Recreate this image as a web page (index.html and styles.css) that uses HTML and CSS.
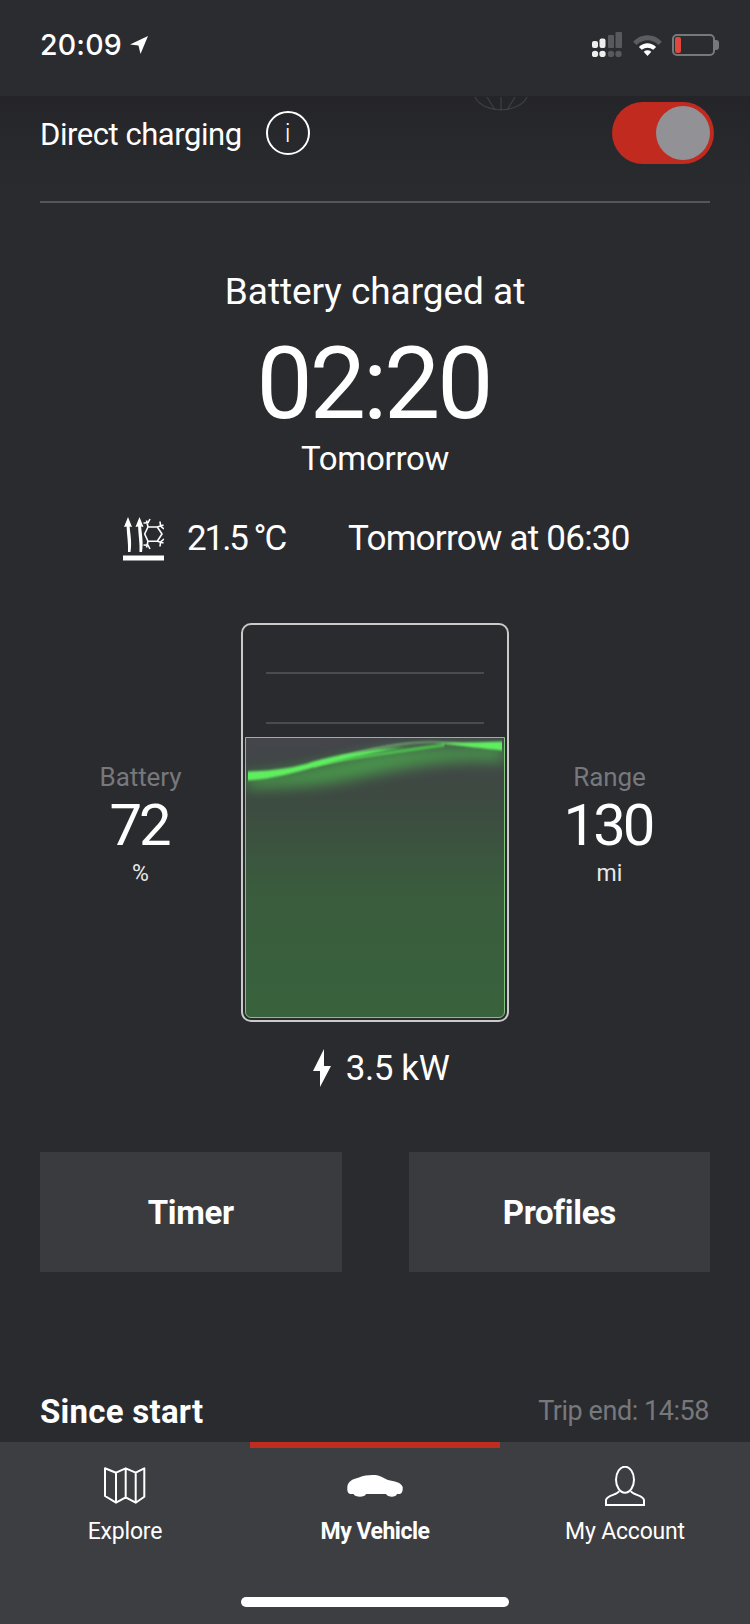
FILE: index.html
```html
<!DOCTYPE html>
<html lang="en">
<head>
<meta charset="utf-8">
<title>My Vehicle</title>
<link rel="stylesheet" href="styles.css">
</head>
<body>
<div class="app">
  <header class="status">
    <div class="status-left">
      <span class="clock">20:09</span>
      <svg class="loc" viewBox="0 0 20 20"><path d="M19 1 L1 9.500 L9.500 10.500 L11.500 19 Z" fill="#fff"/></svg>
    </div>
    <div class="status-right">
      <svg class="signal" viewBox="0 0 31 25">
        <g fill="#eee">
          <rect x="0" y="9" width="6" height="7" rx="2"/><rect x="7.500" y="6.500" width="6" height="9.500" rx="2"/>
          <circle cx="3" cy="22" r="3.200"/><circle cx="10.500" cy="22" r="3.200"/>
        </g>
        <g fill="#58595c">
          <rect x="16" y="3" width="6" height="13" rx="1"/><rect x="23.500" y="0" width="6.500" height="16" rx="1"/>
          <circle cx="19" cy="22" r="3.200"/><circle cx="26.500" cy="22" r="3.200"/>
        </g>
      </svg>
      <svg class="wifi" viewBox="0 0 30 23">
        <path d="M0 8 C8 -1 22 -1 30 8 L26.500 11.500 C19 5 11 5 3.500 11.500 Z" fill="#5c5d60"/>
        <path d="M6 13.500 C11.500 8.500 18.500 8.500 24 13.500 L21 16.500 C17 13.500 13 13.500 9 16.500 Z" fill="#fff"/>
        <path d="M11 18.500 C13.500 16.500 16.500 16.500 19 18.500 L15 23 Z" fill="#fff"/>
      </svg>
      <div class="batt"><div class="batt-body"><div class="batt-level"></div></div><div class="batt-tip"></div></div>
    </div>
  </header>

  <main class="content">
    <svg class="wheel" viewBox="0 0 60 20"><g fill="none" stroke="#3f4044" stroke-width="1.200"><path d="M4 1 C12 18 48 18 56 1"/><path d="M16 1 L24 14 M30 1 V15 M44 1 L36 14"/></g></svg>
    <section class="direct">
      <div class="direct-label">
        <span class="direct-text">Direct charging</span>
        <span class="info">i</span>
      </div>
      <div class="toggle"><div class="knob"></div></div>
    </section>

    <section class="eta">
      <div class="eta-title">Battery charged at</div>
      <div class="eta-time">02:20</div>
      <div class="eta-day">Tomorrow</div>
    </section>

    <section class="climate">
      <svg class="clim-icon" viewBox="0 0 41 44">
        <path d="M5 0 L9 10 L6.600 9.500 C7.500 18 9 26 7.500 35 L5 35 C5.500 26 3.800 18 3.600 9.500 L1 10 Z" fill="#fff"/>
        <path d="M16.500 0 L20.500 10 L18.100 9.500 C19 18 20.500 26 19 35 L16.500 35 C17 26 15.300 18 15.100 9.500 L12.500 10 Z" fill="#fff"/>
        <g fill="none" stroke="#fff" stroke-width="1.600">
          <path d="M25 10 H34.300 L39 17 L34.300 24.300 H25 L21.700 17 Z"/>
          <path d="M25 10 L23.500 3.500 M20.500 6 L25 5.800 L27 2"/>
          <path d="M34.300 10 L40.500 8 M37 4.500 L37.600 9 L41 12"/>
          <path d="M34.300 24.300 L40.500 26 M41 22 L37.600 25 L37 29.500"/>
          <path d="M25 24.300 L23.500 30.500 M20.500 28 L25 28.200 L27 32"/>
        </g>
        <rect x="0" y="38.500" width="41" height="5" fill="#fff"/>
      </svg>
      <span class="clim-temp">21.5 °C</span>
      <span class="clim-when">Tomorrow at 06:30</span>
    </section>

    <section class="gauge">
      <div class="stat">
        <div class="stat-label">Battery</div>
        <div class="stat-value">72</div>
        <div class="stat-unit">%</div>
      </div>
      <div class="cell">
        <div class="tick"></div>
        <div class="tick"></div>
        <div class="fill">
          <svg class="glow" viewBox="0 0 260 70" preserveAspectRatio="none">
            <defs>
              <filter id="b1" x="-10%" y="-80%" width="120%" height="260%"><feGaussianBlur stdDeviation="7"/></filter>
              <filter id="b2" x="-10%" y="-60%" width="120%" height="220%"><feGaussianBlur stdDeviation=".8"/></filter>
            </defs>
            <path d="M0 38 C40 36 80 26 130 14 C170 8 220 8 260 8 L260 24 C210 20 170 28 120 38 C80 48 40 50 0 50 Z" fill="#4fc94f" opacity=".6" filter="url(#b1)"/>
            <path d="M95 19 C120 12 140 8 158 6 C175 3.500 200 4 218 6 C230 7 245 8 257 8" fill="none" stroke="#8fd08f" stroke-width="1.300" opacity=".8" filter="url(#b2)"/>
            <path d="M68 28 C100 20 150 14 200 7" fill="none" stroke="#4fcf4f" stroke-width="3" opacity=".85" filter="url(#b2)"/>
            <path d="M2 33.500 C25 33 50 30 68 23.500 C90 17 120 12 160 9 C120 16 95 22 68 29.500 C45 36 25 41 2 42.500 Z" fill="#5eee5e" filter="url(#b2)"/>
            <path d="M190 5 C220 5 240 4 258 3.500 L258 12.500 C235 10 220 8 190 5 Z" fill="#5eee5e" filter="url(#b2)"/>
          </svg>
        </div>
      </div>
      <div class="stat">
        <div class="stat-label">Range</div>
        <div class="stat-value">130</div>
        <div class="stat-unit">mi</div>
      </div>
    </section>

    <section class="power">
      <svg class="bolt" viewBox="0 0 18 38"><path d="M11 0 L0 22 L7 22 L7 38 L18 17 L11 17 Z" fill="#fff"/></svg>
      <span class="power-text">3.5 kW</span>
    </section>

    <section class="actions">
      <button class="btn">Timer</button>
      <button class="btn">Profiles</button>
    </section>

    <section class="since">
      <span class="since-title">Since start</span>
      <span class="since-trip">Trip end: 14:58</span>
    </section>
  </main>

  <nav class="tabs">
    <div class="tab-row">
      <div class="tab">
        <svg class="tab-icon" viewBox="0 0 56 42"><path d="M8 2.300 L19 6.700 L28.700 2.300 L38.700 6.700 L47.300 2.300 V30.700 L38.700 36.700 L28.700 31.300 L19 36.700 L8 30 Z M19 6.700 V36.700 M28.700 2.300 V31.300 M38.700 6.700 V36.700" fill="none" stroke="#fff" stroke-width="2" stroke-linejoin="round"/></svg>
        <span class="tab-label">Explore</span>
      </div>
      <div class="tab tab-active">
        <svg class="tab-icon" viewBox="0 0 56 42"><path d="M.300 21.500 C.500 16 5 13 12 11.500 C18 9 26 8.500 31 9.500 C35 10.500 38 13 41 14 C47 15 54.500 16.500 55.700 21 C56 25 55 27.500 53 28 L50 28 C49 31.500 41 31.500 39 28 L19 28 C18 31.500 8 31.500 6.500 28 L3 28 C1 27.500 0 25 .300 21.500 Z" fill="#fff"/></svg>
        <span class="tab-label">My Vehicle</span>
      </div>
      <div class="tab">
        <svg class="tab-icon" viewBox="0 0 56 42"><g fill="none" stroke="#fff" stroke-width="2"><ellipse cx="28" cy="13.700" rx="9" ry="13"/><path d="M22 25 C21 29 10 29 9 34 V39 H47 V34 C46 29 35 29 34 25"/></g></svg>
        <span class="tab-label">My Account</span>
      </div>
    </div>
    <div class="home"></div>
  </nav>
</div>
</body>
</html>
```
FILE: styles.css
```css
* { box-sizing: border-box; margin: 0; padding: 0; }
html, body { width: 750px; height: 1624px; overflow: hidden; background: #2a2b2f; }
body { font-family: Roboto, "Liberation Sans", sans-serif; color: #fff; font-weight: 400; }
.app { width: 750px; height: 1624px; display: flex; flex-direction: column; }

.status { height: 96px; flex: none; display: flex; justify-content: space-between; align-items: flex-start; padding: 29px 31px 0 40px; background: #2b2c30; }
.status-left { display: flex; align-items: center; gap: 7px; }
.clock { font-family: Inter, sans-serif; font-size: 28.500px; line-height: 32px; font-weight: 500; letter-spacing: .2px; }
.loc { width: 20px; height: 20px; }
.status-right { display: flex; align-items: center; gap: 10px; padding-top: 3px; }
.signal { width: 31px; height: 25px; }
.wifi { width: 29px; height: 22px; }
.batt { display: flex; align-items: center; }
.batt-body { width: 43px; height: 22px; border: 2px solid #77787b; border-radius: 5px; padding: 1px; }
.batt-level { width: 6px; height: 100%; background: #e0473d; border-radius: 2px; }
.batt-tip { width: 4px; height: 10px; background: #77787b; border-radius: 0 3px 3px 0; }

.content { flex: 1; min-height: 0; position: relative; overflow: hidden; padding: 0 40px; background: linear-gradient(#242429 0, #27282c 40px, #2a2b2f 90px); }
.wheel { position: absolute; left: 471px; top: 0; width: 60px; height: 20px; }

.direct { height: 107px; padding: 0 0 31px; display: flex; justify-content: space-between; align-items: center; border-bottom: 2px solid #55565a; }
.direct-label { display: flex; align-items: center; gap: 24px; }
.direct-text { font-size: 31px; letter-spacing: -.45px; padding-top: 2px; }
.info { width: 44px; height: 44px; border: 2px solid #fff; border-radius: 50%; display: flex; align-items: center; justify-content: center; font-size: 26px; font-weight: 300; }
.toggle { width: 102px; height: 62px; margin-right: -4px; border-radius: 31px; background: #c12a1f; display: flex; align-items: center; justify-content: flex-end; padding-right: 4px; }
.knob { width: 54px; height: 54px; border-radius: 50%; background: #929296; }

.eta { display: flex; flex-direction: column; align-items: center; padding-top: 66px; }
.eta-title { font-size: 37px; line-height: 46px; letter-spacing: -.05px; }
.eta-time { font-size: 100px; line-height: 108px; margin-top: 15px; letter-spacing: -3px; padding-right: 3px; }
.eta-day { font-size: 33px; line-height: 44px; margin-top: -1px; letter-spacing: -.3px; }

.climate { display: flex; align-items: center; padding: 35px 0 0 83px; height: 80px; }
.clim-icon { width: 41px; height: 44px; }
.clim-temp { font-size: 35px; margin-left: 23px; width: 161px; letter-spacing: -2.100px; }
.clim-when { font-size: 35px; letter-spacing: -.75px; }

.gauge { display: flex; align-items: flex-start; margin-top: 62px; }
.stat { width: 201px; display: flex; flex-direction: column; align-items: center; padding-top: 137px; }
.stat-label { font-size: 26px; line-height: 34px; color: #77787c; letter-spacing: -.1px; }
.stat-value { font-size: 58px; line-height: 62px; letter-spacing: -3px; padding-right: 3px; }
.stat-unit { font-size: 23px; line-height: 36px; color: #e8e8e8; }
.cell { width: 268px; height: 399px; border: 2px solid #c9cbc9; border-radius: 10px; padding: 47px 2px 2px; display: flex; flex-direction: column; }
.tick { height: 2px; margin: 0 21px 48px; background: #4a4b4e; flex: none; }
.tick + .tick { margin-bottom: 13px; }
.fill { flex: 1; min-height: 0; border: 1px solid #7fc77f; border-radius: 0 0 6px 6px; overflow: hidden; background: linear-gradient(#44454b 0, #3d4a41 22%, #3a5c3d 55%, #38623c 100%); }
.glow { display: block; width: 100%; height: 70px; }

.power { display: flex; align-items: center; justify-content: center; gap: 15px; height: 40px; margin-top: 26px; padding-left: 12px; }
.bolt { width: 18px; height: 38px; }
.power-text { font-size: 35px; letter-spacing: -.4px; }

.actions { display: flex; justify-content: space-between; margin-top: 64px; }
.btn { width: 301.500px; height: 120px; border: 0; background: #3a3b3f; color: #fff; font-family: Roboto, sans-serif; font-size: 33px; font-weight: 700; letter-spacing: -.3px; }

.since { display: flex; justify-content: space-between; align-items: center; margin-top: 119px; height: 40px; }
.since-title { font-size: 33px; font-weight: 700; letter-spacing: .25px; }
.since-trip { font-size: 27px; color: #77787c; letter-spacing: -.45px; padding-right: 1px; }

.tabs { height: 182px; flex: none; background: #3d3e42; display: flex; flex-direction: column; align-items: center; position: relative; }
.tab-row { width: 100%; display: flex; height: 155px; }
.tab { flex: 1; display: flex; flex-direction: column; align-items: center; padding-top: 24px; gap: 10px; }
.tab-active { border-top: 6px solid #bf2d20; padding-top: 18px; }
.tab-icon { height: 42px; width: 56px; }
.tab-label { font-size: 23px; line-height: 28px; letter-spacing: -.2px; }
.tab-active .tab-label { font-weight: 700; letter-spacing: -.5px; }
.home { width: 268px; height: 10px; border-radius: 5px; background: #fff; }
```
